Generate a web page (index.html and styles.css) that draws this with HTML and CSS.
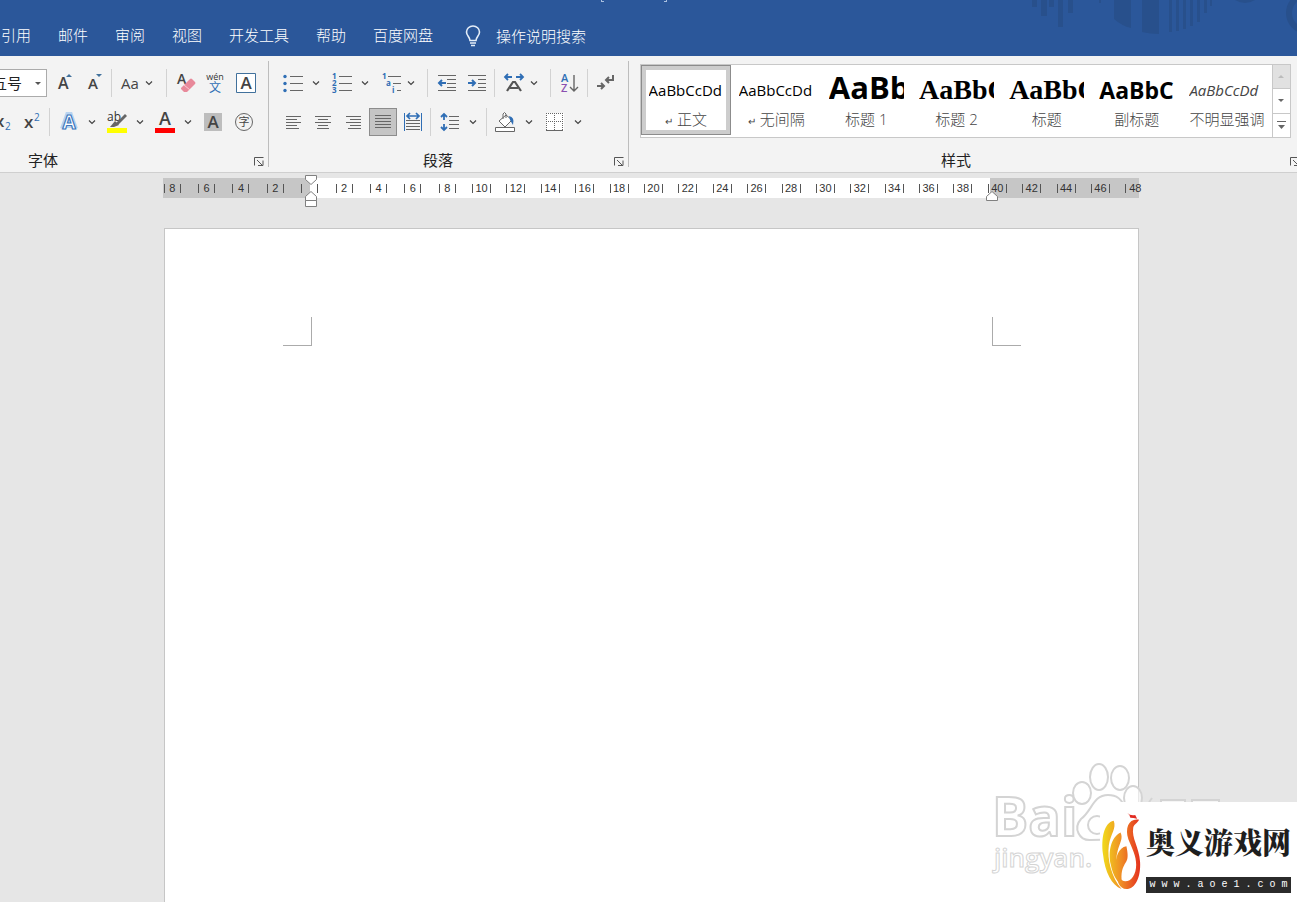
FILE: index.html
```html
<!DOCTYPE html>
<html lang="zh-CN">
<head>
<meta charset="utf-8">
<title>Word</title>
<link rel="stylesheet" href="styles.css">
</head>
<body>
<header class="titlebar">
  <div class="title-edge"><i></i><i></i></div>
  <svg class="title-art" width="267" height="56" viewBox="1030 0 267 56" aria-hidden="true">
    <g fill="#28508c">
      <path d="M1032 0h5v7h-5zM1041 0h6v16h-6zM1049 0h5v7h-5zM1058 0h5v27h-5zM1068 0h5v13h-5zM1099 0h2v3h-2z"/>
      <path d="M1114 0h17v28q-9-2-17-9zM1142 0h17v34q-9 0-17-2z"/>
      <path d="M1169 0h3v32h-3zM1176 0h3v31h-3zM1183 0h3v29h-3zM1190 0h3v26h-3zM1197 0h3v22h-3zM1204 0h3v13h-3zM1210 0h2v6h-2z"/>
      <path d="M1235 0h20q-10 6-20 0z"/>
    </g>
    <circle cx="1307" cy="13" r="18" fill="none" stroke="#28508c" stroke-width="6"/>
  </svg>
  <nav class="tabs">
    <a href="#">引用</a><a href="#">邮件</a><a href="#">审阅</a><a href="#">视图</a><a href="#">开发工具</a><a href="#">帮助</a><a href="#">百度网盘</a>
  </nav>
  <label class="tellme">
    <svg width="18" height="22" viewBox="0 0 18 22" fill="none" stroke="#e4edf8" stroke-width="1.6"><path d="M6 15.500C6 12 2.500 11 2.500 7A6.500 6 0 0 1 15.500 7C15.500 11 12 12 12 15.500ZM6 18h6M7 20.500h4"/></svg>
    <input type="text" placeholder="操作说明搜索" aria-label="操作说明搜索">
  </label>
</header>

<section class="ribbon">
  <div class="group font-group">
    <div class="row">
      <span class="size"><select aria-label="字号"><option>五号</option></select></span>
      <button class="btn" aria-label="增大字号"><svg width="20" height="20"><text x="4" y="16" class="g" font-size="16">A</text><path d="M12 4l3-3 3 3z" fill="#41719c"/></svg></button>
      <button class="btn" aria-label="减小字号"><svg width="20" height="20"><text x="4" y="16" class="g" font-size="15">A</text><path d="M12 1h6l-3 3z" fill="#41719c"/></svg></button>
      <i class="sep"></i>
      <button class="split case"><span class="aa">Aa</span><svg class="chev" width="6" height="4"><path d="M0 .5l3 3 3-3"/></svg></button>
      <i class="sep"></i>
      <button class="btn" aria-label="清除格式"><svg width="20" height="22"><text x="1" y="12" class="g" font-size="14">A</text><path d="M5 16l9-9q1-1 2 0l3 3q1 1 0 2l-8 8H8l-3-3z" fill="#e8899a"/><path d="M8 13l6 5" stroke="#f6cbd2"/></svg></button>
      <button class="btn" aria-label="拼音指南"><svg width="20" height="22"><text x="9" y="8" text-anchor="middle" font-size="9" fill="#333">wén</text><text x="9" y="20" text-anchor="middle" font-size="12" fill="#2f6eb5">文</text></svg></button>
      <button class="btn" aria-label="字符边框"><svg width="20" height="20"><path d="M.5.5h19v19H.5z" fill="#fff" stroke="#41719c"/><text x="10" y="16" text-anchor="middle" class="g" font-size="17">A</text></svg></button>
    </div>
    <div class="row row-cut">
      <button class="btn" aria-label="下标"><svg width="24" height="20"><text x="5" y="15" class="g" font-size="17">x</text><text x="15" y="18" font-size="10" fill="#2f6eb5">2</text></svg></button>
      <button class="btn" aria-label="上标"><svg width="18" height="20"><text x="1" y="16" class="g" font-size="17">x</text><text x="11" y="9" font-size="10" fill="#2f6eb5">2</text></svg></button>
      <i class="sep"></i>
      <button class="split" aria-label="文本效果"><svg width="20" height="22"><path d="M4 18L9 4h2l5 14M6 14h8" fill="none" stroke="#b9d4f0" stroke-width="6"/><text x="10" y="18" text-anchor="middle" font-size="19" font-weight="700" fill="#fff" stroke="#3f78bd" stroke-width="1.200">A</text></svg><svg class="chev" width="6" height="4"><path d="M0 .5l3 3 3-3"/></svg></button>
      <button class="split" aria-label="突出显示"><svg width="22" height="22"><text x="1" y="10" font-size="12" fill="#333">ab</text><path d="M19 3l2 2-9 9-2-2z" fill="#666"/><path d="M9 10l4 4-5 2H4z" fill="#666"/><path d="M1 17h20v5H1z" fill="#ff0"/></svg><svg class="chev" width="6" height="4"><path d="M0 .5l3 3 3-3"/></svg></button>
      <button class="split" aria-label="字体颜色"><svg width="20" height="22"><text x="10" y="14" text-anchor="middle" class="g" font-size="18">A</text><path d="M0 17h20v5H0z" fill="#f00"/></svg><svg class="chev" width="6" height="4"><path d="M0 .5l3 3 3-3"/></svg></button>
      <button class="btn" aria-label="字符底纹"><svg width="18" height="18"><path d="M0 0h18v18H0z" fill="#bdbdbd"/><text x="9" y="15" text-anchor="middle" class="g" font-size="17">A</text></svg></button>
      <button class="btn" aria-label="带圈字符"><svg width="20" height="20"><circle cx="11" cy="10" r="8.500" fill="none" stroke="#666"/><text x="11" y="14" text-anchor="middle" font-size="11" fill="#444">字</text></svg></button>
    </div>
    <div class="caption font-caption">字体</div>
    <button class="launch" aria-label="字体设置"><svg width="10" height="9"><path d="M.5 8.500v-8h9M3 3l5 5M9 3.500V8.500H4"/></svg></button>
  </div>

  <div class="group para-group">
    <div class="row">
      <button class="split" aria-label="项目符号"><svg width="20" height="20" class="ln"><path d="M7 3.500h13M7 10.500h13M7 17.500h13"/><g fill="#2f6eb5" stroke="none"><circle cx="2" cy="3.500" r="1.700"/><circle cx="2" cy="10.500" r="1.700"/><circle cx="2" cy="17.500" r="1.700"/></g></svg><svg class="chev" width="6" height="4"><path d="M0 .5l3 3 3-3"/></svg></button>
      <button class="split" aria-label="编号"><svg width="20" height="20" class="ln"><path d="M7 3.500h13M7 10.500h13M7 17.500h13"/><g class="num"><text x="0" y="6">1</text><text x="0" y="13">2</text><text x="0" y="20">3</text></g></svg><svg class="chev" width="6" height="4"><path d="M0 .5l3 3 3-3"/></svg></button>
      <button class="split tight" aria-label="多级列表"><svg width="20" height="20" class="ln"><path d="M7 3.500h13M12 10.500h8M16 17.500h4"/><g class="num"><text x="1" y="6">1</text><text x="5" y="13">a</text><text x="11" y="20">i</text></g></svg><svg class="chev" width="6" height="4"><path d="M0 .5l3 3 3-3"/></svg></button>
      <i class="sep"></i>
      <button class="btn" aria-label="减少缩进"><svg width="20" height="18" class="ln"><path d="M1 1.500h18M10 5.500h9M10 9.500h9M10 13.500h9M1 16.500h18"/><path d="M9 9H2M5 6L2 9l3 3" stroke="#2f6eb5" stroke-width="2"/></svg></button>
      <button class="btn" aria-label="增加缩进"><svg width="20" height="18" class="ln"><path d="M1 1.500h18M11 5.500h8M11 9.500h8M11 13.500h8M1 16.500h18"/><path d="M1 9h7M5 6l3 3-3 3" stroke="#2f6eb5" stroke-width="2"/></svg></button>
      <i class="sep"></i>
      <button class="split tight" aria-label="中文版式"><svg width="20" height="20" class="ln"><path d="M3 18L9 9h2l6 9M6 15h8" stroke="#555" stroke-width="2.200"/><path d="M1 4h7M4 1L1 4l3 3M12 4h7M16 1l3 3-3 3" stroke="#2f6eb5" stroke-width="1.800"/></svg><svg class="chev" width="6" height="4"><path d="M0 .5l3 3 3-3"/></svg></button>
      <i class="sep"></i>
      <button class="btn" aria-label="排序"><svg width="20" height="20" class="ln"><g stroke="none" font-size="11" font-weight="600"><text x="1" y="9" fill="#2f6eb5">A</text><text x="1" y="19" fill="#8a4fb0">Z</text></g><path d="M14 2v16M10 14l4 4 4-4" stroke-width="1.400"/></svg></button>
      <i class="sep"></i>
      <button class="btn" aria-label="显示编辑标记"><svg width="20" height="18" class="ln"><path d="M16 1v5H9M12 3L9 6l3 3M0 12h7M4 9l3 3-3 3" stroke-width="2"/></svg></button>
    </div>
    <div class="row">
      <button class="btn" aria-label="左对齐"><svg width="16" height="14" class="ln"><path d="M1 1.500h15M1 4.500h11M1 7.500h15M1 10.500h11M1 13.500h13"/></svg></button>
      <button class="btn" aria-label="居中"><svg width="16" height="14" class="ln"><path d="M0 1.500h16M3 4.500h10M0 7.500h16M3 10.500h10M2 13.500h12"/></svg></button>
      <button class="btn" aria-label="右对齐"><svg width="16" height="14" class="ln"><path d="M1 1.500h15M5 4.500h11M1 7.500h15M5 10.500h11M3 13.500h13"/></svg></button>
      <button class="btn on" aria-label="两端对齐" aria-pressed="true"><svg width="16" height="14" class="ln"><path d="M0 .5h16M0 3.500h16M0 6.500h16M0 9.500h16M0 12.500h16"/></svg></button>
      <button class="btn" aria-label="分散对齐"><svg width="18" height="20" class="ln"><path d="M2 8.500h14M2 11.500h14M2 14.500h14M2 17.500h14"/><path d="M.5 1v18M17.500 1v18" stroke="#2f6eb5"/><path d="M3 4h12M6 1L3 4l3 3M12 1l3 3-3 3" stroke="#2f6eb5" stroke-width="1.700"/></svg></button>
      <i class="sep"></i>
      <button class="split" aria-label="行距"><svg width="20" height="20" class="ln"><path d="M9 4.500h10M9 8.500h10M9 12.500h10M9 16.500h10"/><path d="M4 2v6M1 5l3-3 3 3M4 12v6M1 15l3 3 3-3" stroke="#2f6eb5" stroke-width="1.800"/></svg><svg class="chev" width="6" height="4"><path d="M0 .5l3 3 3-3"/></svg></button>
      <i class="sep"></i>
      <button class="split" aria-label="底纹"><svg width="22" height="22" class="ln"><path d="M4 10l7-6 6 5-7 7zM8 8V3q1.500-3 3 0v4" fill="#fff" fill-rule="evenodd"/><path d="M14 5q6 1 4 9l-3-5z" fill="#2f6eb5" stroke="none"/><path d="M.5 16.500h19v4H.5z" fill="#fff"/></svg><svg class="chev" width="6" height="4"><path d="M0 .5l3 3 3-3"/></svg></button>
      <button class="split" aria-label="边框"><svg width="18" height="18" class="ln"><path d="M0 0h18v18H0z" fill="#fff" stroke="none"/><path d="M0 .5h18M0 8.500h18M.5 0v17M8.500 0v17M16.500 0v17" stroke-dasharray="1 1"/><path d="M0 17.500h17"/></svg><svg class="chev" width="6" height="4"><path d="M0 .5l3 3 3-3"/></svg></button>
    </div>
    <div class="caption">段落</div>
    <button class="launch" aria-label="段落设置"><svg width="10" height="9"><path d="M.5 8.500v-8h9M3 3l5 5M9 3.500V8.500H4"/></svg></button>
  </div>

  <div class="group style-group">
    <div class="gallery">
      <button class="style picked"><span class="sample">AaBbCcDd</span><span class="name"><small>↵</small> 正文</span></button>
      <button class="style"><span class="sample">AaBbCcDd</span><span class="name"><small>↵</small> 无间隔</span></button>
      <button class="style"><span class="sample h1">AaBb</span><span class="name">标题 1</span></button>
      <button class="style"><span class="sample h2">AaBbC</span><span class="name">标题 2</span></button>
      <button class="style"><span class="sample h2">AaBbC</span><span class="name">标题</span></button>
      <button class="style"><span class="sample sub">AaBbCc</span><span class="name">副标题</span></button>
      <button class="style"><span class="sample em">AaBbCcDd</span><span class="name">不明显强调</span></button>
      <div class="scroller">
        <button disabled aria-label="上一行"><svg width="6" height="3"><path d="M0 3l3-3 3 3z" fill="#bbb"/></svg></button>
        <button aria-label="下一行"><svg width="6" height="3"><path d="M0 0h6L3 3z" fill="#666"/></svg></button>
        <button aria-label="其他"><svg width="9" height="8"><path d="M0 0h9v1H0zM1 4h7L4.500 8z" fill="#666"/></svg></button>
      </div>
    </div>
    <div class="caption style-caption">样式</div>
    <button class="launch cut" aria-label="样式设置"><svg width="10" height="9"><path d="M.5 8.500v-8h9M3 3l5 5M9 3.500V8.500H4"/></svg></button>
  </div>
</section>

<main class="canvas">
  <div class="ruler">
    <div class="ticks">
      <span>8</span><span>6</span><span>4</span><span>2</span><span></span><span>2</span><span>4</span><span>6</span><span>8</span><span class="w">10</span><span class="w">12</span><span class="w">14</span><span class="w">16</span><span class="w">18</span><span class="w">20</span><span class="w">22</span><span class="w">24</span><span class="w">26</span><span class="w">28</span><span class="w">30</span><span class="w">32</span><span class="w">34</span><span class="w">36</span><span class="w">38</span><span class="w">40</span><span class="w">42</span><span class="w">44</span><span class="w">46</span><span class="w last">48</span>
    </div>
    <svg class="indent left" width="12" height="32" fill="#fff" stroke="#808080"><path d="M.5.5h11v4L6 9.500.5 4.500zM6 16.500l5.500 5v4H.5v-4zM.5 25.500h11v6H.5z"/></svg>
    <svg class="indent right" width="12" height="10" fill="#fff" stroke="#808080"><path d="M6 .5l5.500 5v4H.5v-4z"/></svg>
  </div>
  <article class="page"><i class="mark tl"></i><i class="mark tr"></i></article>
</main>

<svg class="baidu" width="240" height="130" viewBox="0 0 240 130" aria-hidden="true">
  <g fill="#fff" fill-opacity=".6" stroke="#d4d4d4" stroke-width="2">
    <text x="-2" y="84" font-size="54" font-weight="700">Bai</text>
    <ellipse cx="88" cy="41" rx="9" ry="11"/><ellipse cx="105" cy="25" rx="9" ry="13"/><ellipse cx="126" cy="26" rx="9" ry="12"/><ellipse cx="139" cy="46" rx="9" ry="12"/>
    <path d="M114 43c-15 0-16 16-27 24-8 9-2 22 10 21l40-1c15-3 11-19 1-25-10-8-9-19-24-19z"/>
    <circle cx="103" cy="73" r="9"/>
    <path d="M158 46l-12 18h8M167 48h24v8h-24zM198 48h27v8h-27z"/>
    <text x="0" y="115" font-size="26" font-weight="600" stroke-width="1">jingyan.</text>
  </g>
</svg>

<aside class="site">
  <svg width="42" height="82" viewBox="0 0 42 82">
    <defs><linearGradient id="flame" gradientUnits="userSpaceOnUse" x1="2" y1="0" x2="38" y2="0"><stop offset="0" stop-color="#f0d51c"/><stop offset=".5" stop-color="#ef8c25"/><stop offset="1" stop-color="#e5351f"/></linearGradient></defs>
    <g fill="url(#flame)">
      <path d="M12 8C2 10-1 26 1 42c2 19 9 32 19 36C10 66 5 48 7 33c2-12 8-17 5-25z"/>
      <path d="M19 20C9 25 6 40 9 53c2 11 7 18 12 22-6-12-8-25-5-36 2-8 6-13 3-19z"/>
      <path d="M25 34c-8 1-12 12-11 23 1 8 4 14 7 17-2-9-1-16 2-21 2-4 5-5 2-19z"/>
      <path d="M38 7c-10-2-15 8-11 20 4 10 8 17 8 26 0 10-5 17-11 17-5 0-8-5-8-12-2 12 2 20 9 20 9 0 15-12 14-28C38 35 30 26 32 15c1-4 4-4 6-8z"/>
    </g>
    <path d="M26 0q3 3 8 2l2 4q-4-1-7-1 0-3-3-5z" fill="#e12a20"/>
  </svg>
  <div class="site-text"><strong>奥义游戏网</strong><span>w w w . a o e 1 . c o m</span></div>
</aside>
</body>
</html>
```
FILE: styles.css
```css
* { box-sizing: border-box; }
body {
  margin: 0;
  min-height: 100vh;
  display: flex;
  flex-direction: column;
  overflow: hidden;
  position: relative;
  background: #e6e6e6;
  color: #222;
  font: 15px/20px "Open Sans", "Noto Sans CJK SC", sans-serif;
}
button { border: 0; padding: 0; background: none; color: inherit; font: inherit; }
svg { display: block; flex: none; overflow: visible; }

.titlebar {
  position: relative;
  height: 56px;
  padding: 15px 0 0 1px;
  display: flex;
  align-items: flex-start;
  background: #2b579a;
  font-weight: 300;
}
.title-art { position: absolute; right: 0; top: 0; overflow: hidden; }
.title-edge {
  position: absolute;
  top: 0;
  left: 601px;
  width: 66px;
  height: 2px;
  display: flex;
  justify-content: space-between;
}
.title-edge i { width: 3px; border: 1px solid #a9bfdf; border-width: 0 0 1px 1px; }
.title-edge i:last-child { border-width: 0 1px 1px 0; }
.tabs { display: flex; gap: 27px; }
.tabs a { color: #fff; text-decoration: none; line-height: 40px; height: 40px; }
.tellme { display: flex; align-items: center; gap: 14px; height: 42px; margin-left: 31px; }
.tellme input {
  width: 160px;
  padding: 0;
  border: 0;
  outline: 0;
  background: none;
  color: #fff;
  font: inherit;
}
.tellme input::placeholder { color: #fff; opacity: 1; }

.ribbon {
  height: 117px;
  display: flex;
  background: #f3f3f3;
  border-bottom: 1px solid #cfcfcf;
}
.group {
  position: relative;
  flex: none;
  padding-top: 13px;
  display: flex;
  flex-direction: column;
  gap: 11px;
  overflow: hidden;
}
.group:not(.style-group)::after {
  content: "";
  position: absolute;
  right: 0;
  top: 5px;
  bottom: 5px;
  border-right: 1px solid #bdbdbd;
}
.font-group { width: 269px; }
.para-group { width: 360px; }
.para-group .row { padding-left: 9px; }
.style-group { flex: 1; padding-top: 8px; gap: 12px; }
.row { display: flex; align-items: center; height: 28px; flex: none; }
.row-cut { margin-left: -13px; }
.btn { width: 30px; height: 28px; display: flex; align-items: center; justify-content: center; flex: none; }
.split { width: 49px; height: 28px; display: flex; align-items: center; flex: none; }
.split > :first-child { margin: 0 5px; flex: none; }
.split > svg:first-child[width="22"] { margin: 0 4px; }
.split > svg:first-child[width="18"] { margin: 0 6px; }
.row-cut .split { width: 48px; }
.split .chev { margin-left: 5px; }
.tight .chev { margin-left: 2px; }
.chev { fill: none; stroke: #444; stroke-width: 1.2; }
.case { width: 48px; }
.aa { font-size: 15px; color: #444; }
.case .chev { margin-left: 2px; }
.btn.on { background: #c5c5c5; border: 1px solid #8c8c8c; width: 28px; margin: 0 1px; }
.sep { width: 1px; height: 28px; margin: 0 4px 0 2px; background: #d2d2d2; flex: none; }
.size { position: relative; width: 67px; margin: 0 2px 0 -20px; flex: none; }
.size select {
  appearance: none;
  display: block;
  width: 67px;
  height: 28px;
  padding: 0 0 0 11px;
  border: 1px solid #ababab;
  border-radius: 0;
  background: #fff;
  color: #222;
  font: inherit;
}
.size::after {
  content: "";
  position: absolute;
  right: 6px;
  top: 13px;
  border: 3px solid transparent;
  border-top-color: #555;
}
.g { fill: #444; font-weight: 600; }
.ln { fill: none; stroke: #666; }
.ln text { stroke: none; }
.num { fill: #2f6eb5; font-size: 8px; font-weight: 700; }
.caption { font-size: 15px; line-height: 20px; text-align: center; margin-top: 3px; padding-right: 22px; }
.font-caption { text-align: left; padding-left: 28px; }
.style-caption { margin: 0; padding-right: 14px; }
.launch { position: absolute; right: 5px; bottom: 6px; }
.launch.cut { right: -3px; }
.launch svg { fill: none; stroke: #555; }

.gallery {
  display: flex;
  height: 74px;
  margin: 0 6px 0 11px;
  border: 1px solid #c8c8c8;
  background: #fff;
}
.style {
  flex: 1;
  min-width: 0;
  height: 70px;
  display: flex;
  flex-direction: column;
  align-items: center;
  padding-top: 7px;
  border: 1px solid transparent;
}
.picked { border-color: #8c8c8c; box-shadow: inset 0 0 0 4px #cdcdcd; }
.sample {
  width: 75px;
  height: 34px;
  overflow: hidden;
  white-space: nowrap;
  text-align: left;
  color: #000;
  font: 15px/34px "Open Sans", sans-serif;
}
.h1 { font-size: 31px; line-height: 28px; font-weight: 700; }
.h2 { font-family: "Liberation Serif", serif; font-size: 28px; font-weight: 700; }
.sub { font-size: 23px; font-weight: 700; }
.em { font-style: italic; color: #444; }
.name { line-height: 24px; color: #444; font-weight: 300; white-space: nowrap; }
.name small { font-size: 10px; }
.scroller { width: 18px; border-left: 1px solid #c8c8c8; display: flex; flex-direction: column; }
.scroller button { flex: 1; display: flex; align-items: center; justify-content: center; }
.scroller button + button { border-top: 1px solid #c8c8c8; }
.scroller button:disabled { background: #e1e1e1; }

.canvas { flex: 1; display: flex; flex-direction: column; padding: 5px 158px 0 163px; }
.ruler {
  position: relative;
  height: 20px;
  background: linear-gradient(90deg, #c6c6c6 147px, #fff 147px, #fff calc(100% - 149px), #c6c6c6 calc(100% - 149px));
}
.ticks {
  display: grid;
  grid-template-columns: repeat(29, 1fr);
  justify-items: center;
  align-items: center;
  height: 21px;
  margin: 0 -13px 0 -8px;
  font: 11px/9px "Liberation Sans", sans-serif;
  color: #333;
}
.ticks span { width: 17px; height: 9px; text-align: center; border: 1px solid #555; border-width: 0 1px; }
.ticks .w { width: 19px; }
.ticks .last { border-right: 0; }
.indent { position: absolute; }
.indent.left { left: 142px; top: -3px; }
.indent.right { right: 141px; top: 13px; }
.page {
  flex: 1;
  display: flex;
  justify-content: space-between;
  margin: 30px 0 0 1px;
  padding: 88px 117px 0 118px;
  background: #fff;
  border: 1px solid #c6c6c6;
  border-bottom: 0;
}
.mark { width: 29px; height: 29px; border: 0 solid #ababab; border-bottom-width: 1px; }
.tl { border-right-width: 1px; }
.tr { border-left-width: 1px; }

.baidu { position: absolute; right: 63px; bottom: 20px; font-family: "Open Sans", sans-serif; }
.site {
  position: absolute;
  right: 0;
  bottom: 0;
  width: 197px;
  height: 100px;
  padding: 10px 8px 9px 0;
  display: flex;
  gap: 3px;
  background: #fff;
}
.site > svg { margin-left: 2px; width: 41px; }
.site-text { flex: 1; display: flex; flex-direction: column; justify-content: space-between; }
.site-text strong {
  font: 900 29px/60px "Noto Serif CJK SC", "Noto Sans CJK SC", serif;
  color: #1e1e1e;
  white-space: nowrap;
}
.site-text span {
  height: 16px;
  background: #2b2b2b;
  color: #fff;
  text-align: center;
  white-space: nowrap;
  font: 10px/16px "Liberation Mono", monospace;
}
```
